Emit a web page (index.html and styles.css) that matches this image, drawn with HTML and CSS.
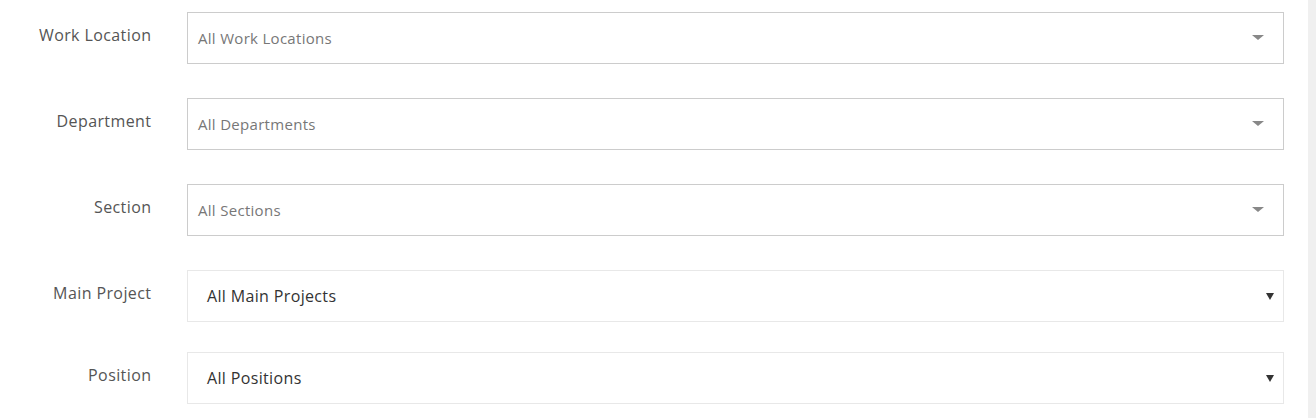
FILE: index.html
```html
<!DOCTYPE html>
<html>
<head>
<meta charset="utf-8">
<link rel="stylesheet" href="styles.css">
</head>
<body>
<div class="page">
  <form class="filters">
    <div class="row row-s2">
      <label class="lbl">Work Location</label>
      <div class="s2">
        <span class="s2-text">All Work Locations</span>
        <span class="s2-arrow"></span>
      </div>
    </div>
    <div class="row row-s2">
      <label class="lbl">Department</label>
      <div class="s2">
        <span class="s2-text">All Departments</span>
        <span class="s2-arrow"></span>
      </div>
    </div>
    <div class="row row-s2">
      <label class="lbl">Section</label>
      <div class="s2">
        <span class="s2-text">All Sections</span>
        <span class="s2-arrow"></span>
      </div>
    </div>
    <div class="row row-native">
      <label class="lbl">Main Project</label>
      <div class="native">
        <span class="native-text">All Main Projects</span>
        <svg class="native-arrow" width="8" height="7" viewBox="0 0 8 7"><polygon points="0,0 8,0 4,7" fill="#333"/></svg>
      </div>
    </div>
    <div class="row row-native">
      <label class="lbl">Position</label>
      <div class="native">
        <span class="native-text">All Positions</span>
        <svg class="native-arrow" width="8" height="7" viewBox="0 0 8 7"><polygon points="0,0 8,0 4,7" fill="#333"/></svg>
      </div>
    </div>
  </form>
  <div class="gutter"></div>
</div>
</body>
</html>
```
FILE: styles.css
```css
html, body {
  margin: 0;
  padding: 0;
  background: #fff;
  height: 100%;
}
body {
  font-family: "Open Sans", "Liberation Sans", sans-serif;
  overflow: hidden;
}
.page {
  display: flex;
  height: 418px;
}
.filters {
  flex: 1;
  padding-top: 12px;
  margin: 0;
}
.gutter {
  width: 8px;
  background: #f0f0f0;
}
.row {
  display: grid;
  grid-template-columns: 151px 1097px;
  column-gap: 36px;
  align-items: start;
}
.row-s2 {
  margin-bottom: 34px;
}
.row-native {
  margin-bottom: 30px;
}
.lbl {
  text-align: right;
  font-size: 16px;
  letter-spacing: 0.4px;
  line-height: 20px;
  padding-top: 13px;
  color: #555;
  margin-right: -0.4px;
}
.s2 {
  box-sizing: border-box;
  height: 52px;
  border: 1px solid #ccc;
  display: flex;
  align-items: center;
  justify-content: space-between;
  padding: 0 19px 0 10px;
}
.s2-text {
  font-size: 15px;
  letter-spacing: 0.3px;
  color: #777;
  margin-top: -1px;
}
.s2-arrow {
  width: 0;
  height: 0;
  border-style: solid;
  border-width: 5px 6px 0 6px;
  border-color: #888 transparent transparent transparent;
  margin-top: -1px;
}
.native {
  box-sizing: border-box;
  height: 52px;
  border: 1px solid #e8e8e8;
  display: flex;
  align-items: center;
  justify-content: space-between;
  padding: 0 9px 0 19px;
}
.native-text {
  font-size: 16px;
  letter-spacing: 0.35px;
  color: #333;
}
.native-arrow {
  display: block;
}
```
